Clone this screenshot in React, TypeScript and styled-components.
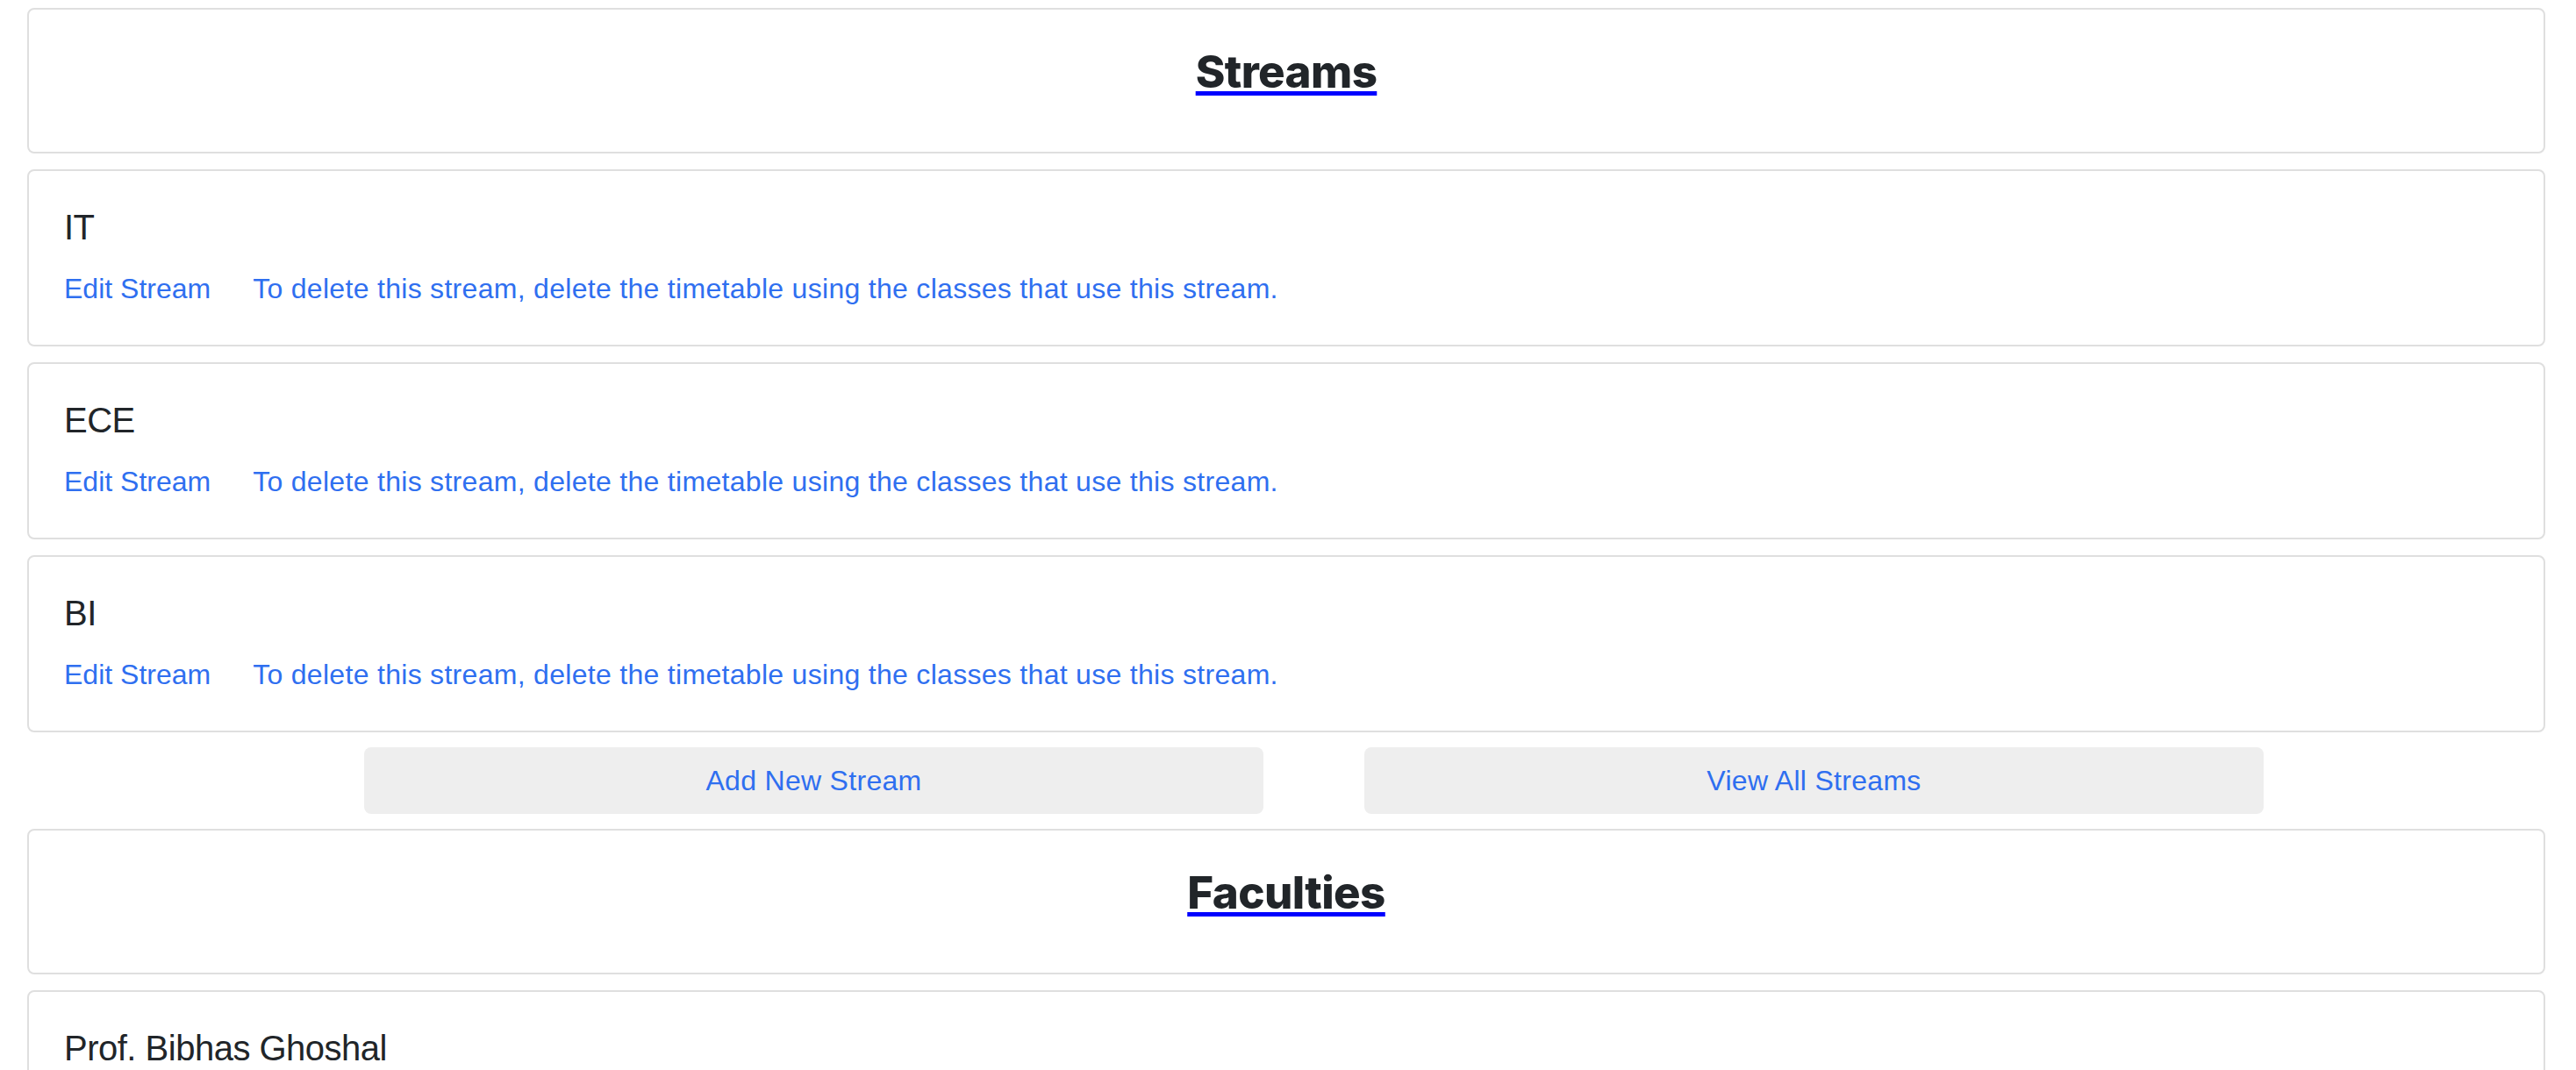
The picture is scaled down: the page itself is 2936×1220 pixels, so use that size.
import React from 'react'
import styled, { createGlobalStyle } from 'styled-components'

const GlobalStyle = createGlobalStyle`
  html, body {
    margin: 0;
    padding: 0;
    background: #ffffff;
  }
  body {
    font-family: "Liberation Sans", Arial, sans-serif;
    color: #212529;
  }
`

interface Stream {
  name: string
}

interface Faculty {
  name: string
}

const streams: Stream[] = [{ name: 'IT' }, { name: 'ECE' }, { name: 'BI' }]
const faculties: Faculty[] = [{ name: 'Prof. Bibhas Ghoshal' }]

const App: React.FC = () => {
  return (
    <Page>
      <GlobalStyle />
      <Card>
        <SectionBody>
          <SectionTitle>Streams</SectionTitle>
        </SectionBody>
      </Card>
      {streams.map((s) => (
        <Card key={s.name}>
          <ItemBody>
            <ItemTitle>{s.name}</ItemTitle>
            <LinkRow>
              <ItemLink href='#'>Edit Stream</ItemLink>
              <ItemLink href='#'>
                To delete this stream, delete the timetable using the classes that use this stream.
              </ItemLink>
            </LinkRow>
          </ItemBody>
        </Card>
      ))}
      <ButtonRow>
        <GreyButton href='#'>Add New Stream</GreyButton>
        <GreyButton href='#'>View All Streams</GreyButton>
      </ButtonRow>
      <Card>
        <SectionBody>
          <SectionTitle>Faculties</SectionTitle>
        </SectionBody>
      </Card>
      {faculties.map((f) => (
        <Card key={f.name}>
          <ItemBody>
            <ItemTitle>{f.name}</ItemTitle>
            <LinkRow>
              <ItemLink href='#'>Edit Faculty</ItemLink>
              <ItemLink href='#'>
                To delete this faculty, delete the timetable using the classes that use this faculty.
              </ItemLink>
            </LinkRow>
          </ItemBody>
        </Card>
      ))}
    </Page>
  )
}

const Page = styled.div`
  display: flex;
  flex-direction: column;
  gap: 18px;
  padding: 9px 35px 40px 31px;
`

const Card = styled.div`
  background: #ffffff;
  border: 2px solid #dfdfdf;
  border-radius: 8px;
`

const SectionBody = styled.div`
  padding: 31px 40px 51px;
  text-align: center;
`

const SectionTitle = styled.h3`
  display: inline-block;
  margin: 0;
  font-family: Inter, "Liberation Sans", sans-serif;
  font-size: 51px;
  line-height: 80px;
  font-weight: 800;
  letter-spacing: -0.6px;
  color: #212529;
  text-decoration: underline;
  text-decoration-color: #0000ff;
  text-decoration-thickness: 5px;
  text-underline-offset: 4px;
`

const ItemBody = styled.div`
  padding: 40px;
`

const ItemTitle = styled.h5`
  margin: 0 0 22px;
  font-size: 40px;
  line-height: 48px;
  font-weight: 400;
  letter-spacing: -0.5px;
  color: #212529;
`

const LinkRow = styled.div`
  display: flex;
  gap: 48px;
`

const ItemLink = styled.a`
  font-size: 32px;
  line-height: 48px;
  letter-spacing: 0.3px;
  color: #2f6ff0;
  text-decoration: none;

  &:first-child {
    letter-spacing: 0;
  }
`

const ButtonRow = styled.div`
  display: flex;
  gap: 115px;
  margin: -1px 0;
  padding-left: 384px;
`

const GreyButton = styled.a`
  width: 1025px;
  height: 76px;
  display: flex;
  align-items: center;
  justify-content: center;
  background: #eeeeee;
  border-radius: 8px;
  font-size: 32px;
  letter-spacing: 0.3px;
  color: #2f6ff0;
  text-decoration: none;
`

export default App
